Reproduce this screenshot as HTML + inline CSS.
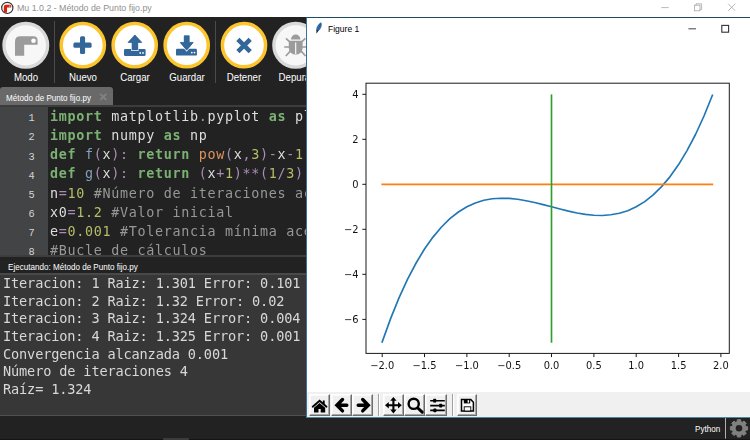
<!DOCTYPE html>
<html lang="es">
<head>
<meta charset="utf-8">
<title>Mu 1.0.2 - Método de Punto fijo.py</title>
<style>
html,body{margin:0;padding:0;}
body{width:750px;height:440px;overflow:hidden;background:#222;position:relative;font-family:"Liberation Sans",sans-serif;}
.abs{position:absolute;}
#titlebar{left:0;top:0;width:750px;height:16.7px;background:#fff;}
#title{left:17px;top:2.4px;font-size:9.4px;transform:scaleX(0.94);transform-origin:0 0;line-height:12px;color:#8f8f8f;white-space:nowrap;}
#toolbar{left:0;top:16.7px;width:750px;height:71.3px;background:#222;}
.btn{position:absolute;top:22px;width:47px;height:47px;}
.lbl{position:absolute;top:71.3px;width:60px;text-align:center;font-size:11.2px;transform:scaleX(0.865);line-height:12px;color:#fff;white-space:nowrap;}
.sep{position:absolute;top:21px;width:1px;height:62px;background:#4a4a4a;}
#tabbar{left:0;top:88px;width:750px;height:18px;background:#222;}
#tab{left:0;top:87px;width:113px;height:18px;background:#696969;border-radius:3px 3px 0 0;}
#tabline{left:0;top:105px;width:750px;height:2px;background:#3c3c3c;}
#tabtxt{left:5.5px;top:91.5px;font-size:9.35px;transform:scaleX(0.865);transform-origin:0 0;line-height:12px;color:#fff;white-space:nowrap;}
#margin{left:0;top:107px;width:48.4px;height:148.4px;background:#424446;}
#editor{left:48.4px;top:107px;width:702px;height:148.4px;background:#222;}
.ln{position:absolute;left:0;width:34.7px;text-align:right;font-family:"Liberation Mono",monospace;font-size:10.3px;line-height:19px;color:#d4d4d4;}
.cl{position:absolute;left:50.2px;font-family:"DejaVu Sans Mono","Liberation Mono",monospace;font-size:13.4px;letter-spacing:0.684px;line-height:19px;will-change:transform;color:#ddd;white-space:pre;}
.k{color:#7bb172;font-weight:bold;}
.o{color:#aa8db4;}
.n{color:#b5bd68;}
.f{color:#81a2be;}
.h{color:#de935f;}
.c{color:#969896;}
#split{left:0;top:255.4px;width:750px;height:1.6px;background:#3d3d3d;}
#runhdr{left:0;top:257px;width:750px;height:16.4px;background:#222;}
#runtxt{left:8.3px;top:261px;font-size:9.35px;transform:scaleX(0.865);transform-origin:0 0;line-height:12px;color:#fff;white-space:nowrap;}
#out{left:0;top:273.4px;width:750px;height:139.2px;background:#373737;border-top:2px solid #494949;border-bottom:1px solid #505050;}
.ol{position:absolute;left:2.8px;font-family:"DejaVu Sans Mono","Liberation Mono",monospace;font-size:13.6px;letter-spacing:-0.15px;line-height:17.65px;color:#d8d8d8;will-change:transform;white-space:pre;}
#status{left:0;top:415.6px;width:750px;height:25px;background:#222;}
#py{left:695px;top:422.9px;font-size:9.35px;transform:scaleX(0.865);transform-origin:0 0;line-height:12px;color:#fff;}
#fig{left:306px;top:17px;width:460px;height:401px;background:#fff;box-sizing:border-box;border:1px solid #357697;border-top-color:#1f4b5e;border-bottom-color:#4a88a6;}
#figtitle{left:328.3px;top:22.9px;font-size:9px;transform:scaleX(0.945);transform-origin:0 0;line-height:12px;color:#000;white-space:nowrap;}
#figbar{left:307px;top:391.6px;width:443px;height:25.4px;background:#f0f0f0;}

.tkb{position:absolute;top:394px;height:21.6px;box-sizing:border-box;background:#f0f0f0;border-left:1px solid #fff;border-top:1px solid #fff;border-right:1px solid #6d6d6d;border-bottom:1px solid #6d6d6d;box-shadow:inset -1px -1px 0 #a8a8a8, inset 1px 1px 0 #fafafa;}
.tks{position:absolute;top:394px;height:21.6px;width:1px;background:#a0a0a0;border-right:1px solid #fff;}
svg{position:absolute;left:0;top:0;}
text{font-family:"DejaVu Sans",sans-serif;}
</style>
</head>
<body>
<div class="abs" id="titlebar"></div>
<div class="abs" id="title">Mu 1.0.2 - Método de Punto fijo.py</div>
<div class="abs" id="toolbar"></div>


<!-- toolbar buttons -->
<svg id="tb" width="750" height="440" viewBox="0 0 750 440">
<g>
<circle cx="25.8" cy="45.3" r="21.8" fill="#f7f7f7" stroke="#d9d9d9" stroke-width="3.4"/>
<path d="M15 55.8 L15 41.6 Q15 36.3 20.4 36.3 L33.4 36.3 Q37.6 36.3 37.6 40.4 L37.6 44.8 L24.2 44.8 L24.2 55.8 Z" fill="#9b9b9b"/>
<circle cx="33.5" cy="40.7" r="2.3" fill="#fff"/>
</g>
<g fill="#fff" stroke="#fcc52e" stroke-width="3.5">
<circle cx="82.8" cy="45.2" r="21.6"/>
<circle cx="134.7" cy="45.2" r="21.6"/>
<circle cx="186.7" cy="45.2" r="21.6"/>
<circle cx="244" cy="45.2" r="21.6"/>
</g>
<!-- nuevo -->
<g fill="#336699"><rect x="73.4" y="42.6" width="18.2" height="5.1" rx="1.5"/><rect x="80" y="36.3" width="5.1" height="17.8" rx="1.5"/></g>
<!-- cargar -->
<g fill="#336699">
<rect x="124" y="49.1" width="21.6" height="6.8" rx="1.2"/>
<path d="M134.9 34.9 L141.8 42.4 L137.8 42.4 L137.8 50.3 L132 50.3 L132 42.4 L128 42.4 Z" stroke="#fff" stroke-width="1.5" paint-order="stroke"/>
<path d="M134.9 34.9 L141.8 42.4 L137.8 42.4 L137.8 49.3 L132 49.3 L132 42.4 L128 42.4 Z" stroke="#336699" stroke-width="0.6" stroke-linejoin="round"/>
<circle cx="140.2" cy="52.9" r="0.9" fill="#fff"/><circle cx="143" cy="52.9" r="0.9" fill="#fff"/>
</g>
<!-- guardar -->
<g fill="#336699">
<rect x="176" y="48.8" width="20.9" height="6.8" rx="1.2"/>
<path d="M184.2 35.8 L189.2 35.8 L189.2 42.4 L193.3 42.4 L186.7 50.2 L180.1 42.4 L184.2 42.4 Z" stroke="#fff" stroke-width="2" paint-order="stroke"/>
<path d="M184.2 35.8 L189.2 35.8 L189.2 42.4 L193.3 42.4 L186.7 50.2 L180.1 42.4 L184.2 42.4 Z" stroke="#336699" stroke-width="0.6" stroke-linejoin="round"/>
<circle cx="191.8" cy="52.6" r="0.9" fill="#fff"/><circle cx="194.5" cy="52.6" r="0.9" fill="#fff"/>
</g>
<!-- detener -->
<path d="M237.9 39.3 L250.2 51.6 M250.2 39.3 L237.9 51.6" stroke="#336699" stroke-width="4.5" stroke-linecap="butt" fill="none"/>
<!-- depurar -->
<g>
<circle cx="295.7" cy="45.3" r="21.8" fill="#f7f7f7" stroke="#d9d9d9" stroke-width="3.4"/>
<g stroke="#9b9b9b" stroke-width="1.6" fill="none">
<path d="M284.2 47 H307.2 M285.8 56 L291 50.4 M305.6 56 L300.4 50.4 M286 38.4 L290.5 42.6 M305.4 38.4 L300.9 42.6"/>
</g>
<path d="M291 39.4 A4.7 4.9 0 0 1 300.4 39.4 Z" fill="#9b9b9b"/>
<path d="M288.8 40.8 H302.6 V48 A6.9 6.6 0 0 1 288.8 48 Z" fill="#9b9b9b"/>
<path d="M295.7 42.5 V54" stroke="#fff" stroke-width="1.1"/>
</g>
</svg>
<div class="lbl" style="left:-4.5px">Modo</div>
<div class="sep" style="left:54px"></div>
<div class="lbl" style="left:52.5px">Nuevo</div>
<div class="lbl" style="left:104.5px">Cargar</div>
<div class="lbl" style="left:157px">Guardar</div>
<div class="sep" style="left:215.4px"></div>
<div class="lbl" style="left:214px">Detener</div>
<div class="lbl" style="left:266px">Depurar</div>

<div class="abs" id="tabbar"></div>
<div class="abs" id="tab"></div>
<div class="abs" id="tabline"></div>
<div class="abs" id="tabtxt">Método de Punto fijo.py</div>

<div class="abs" id="margin"></div>
<div class="abs" id="editor"></div>
<div class="ln" style="top:109.30px">1</div>
<div class="ln" style="top:128.45px">2</div>
<div class="ln" style="top:147.60px">3</div>
<div class="ln" style="top:166.75px">4</div>
<div class="ln" style="top:185.90px">5</div>
<div class="ln" style="top:205.05px">6</div>
<div class="ln" style="top:224.20px">7</div>
<div class="ln" style="top:243.35px">8</div>
<div class="cl" style="top:107.00px"><span class="k">import</span> matplotlib<span class="o">.</span>pyplot <span class="k">as</span> plt</div>
<div class="cl" style="top:126.15px"><span class="k">import</span> numpy <span class="k">as</span> np</div>
<div class="cl" style="top:145.30px"><span class="k">def</span> <span class="f">f</span><span class="o">(</span>x<span class="o">):</span> <span class="k">return</span> <span class="h">pow</span><span class="o">(</span>x<span class="o">,</span><span class="n">3</span><span class="o">)-</span>x<span class="o">-</span><span class="n">1</span></div>
<div class="cl" style="top:164.45px"><span class="k">def</span> <span class="f">g</span><span class="o">(</span>x<span class="o">):</span> <span class="k">return</span> <span class="o">(</span>x<span class="o">+</span><span class="n">1</span><span class="o">)**(</span><span class="n">1</span><span class="o">/</span><span class="n">3</span><span class="o">)</span></div>
<div class="cl" style="top:183.60px">n<span class="o">=</span><span class="n">10</span> <span class="c">#Número de iteraciones aceptadas</span></div>
<div class="cl" style="top:202.75px">x0<span class="o">=</span><span class="n">1.2</span> <span class="c">#Valor inicial</span></div>
<div class="cl" style="top:221.90px">e<span class="o">=</span><span class="n">0.001</span> <span class="c">#Tolerancia mínima aceptada</span></div>
<div class="cl" style="top:241.05px"><span class="c">#Bucle de cálculos</span></div>

<div class="abs" id="split"></div>
<div class="abs" id="runhdr"></div>
<div class="abs" id="runtxt">Ejecutando: Método de Punto fijo.py</div>
<div class="abs" id="out"></div>
<div class="ol" style="top:275px">Iteracion: 1 Raiz: 1.301 Error: 0.101</div>
<div class="ol" style="top:292.65px">Iteracion: 2 Raiz: 1.32 Error: 0.02</div>
<div class="ol" style="top:310.3px">Iteracion: 3 Raiz: 1.324 Error: 0.004</div>
<div class="ol" style="top:327.95px">Iteracion: 4 Raiz: 1.325 Error: 0.001</div>
<div class="ol" style="top:345.6px">Convergencia alcanzada 0.001</div>
<div class="ol" style="top:363.25px">Número de iteraciones 4</div>
<div class="ol" style="top:380.9px">Raíz= 1.324</div>

<div class="abs" id="status"></div>
<div class="abs" id="py">Python</div>
<div class="abs" style="left:0;top:438.6px;width:750px;height:1.4px;background:#151515"></div>
<div class="abs" style="left:163px;top:437.8px;width:25.5px;height:2.2px;background:#3b3b3b"></div>

<div class="abs" id="fig"></div>
<div class="abs" id="figtitle">Figure 1</div>
<div class="abs" id="figbar"></div>

<div class="tkb" style="left:309.3px;width:21.2px"></div>
<div class="tkb" style="left:330.5px;width:21.2px"></div>
<div class="tkb" style="left:351.7px;width:21.8px"></div>
<div class="tkb" style="left:382.6px;width:21.2px"></div>
<div class="tkb" style="left:403.8px;width:21.6px"></div>
<div class="tkb" style="left:425.4px;width:22px"></div>
<div class="tkb" style="left:456.6px;width:20.9px"></div>
<div class="tks" style="left:377.9px"></div>
<div class="tks" style="left:451.9px"></div>
<svg id="figicons" width="750" height="440" viewBox="0 0 750 440">
<!-- home -->
<g fill="#000">
<path d="M312.7 406.7 L319.6 400.8 L326.5 406.7" fill="none" stroke="#000" stroke-width="1.9" stroke-linecap="round"/>
<rect x="322.8" y="400.5" width="1.9" height="3.6"/>
<path d="M319.6 402.9 L325.2 407.7 V412.5 H320.7 V409 H318.5 V412.5 H314 V407.7 Z"/>
</g>
<!-- back -->
<path d="M346.8 405.2 H338 M342.5 399.5 L336.9 405.2 L342.5 410.9" stroke="#000" stroke-width="3.4" fill="none" stroke-linecap="round" stroke-linejoin="miter"/>
<!-- forward -->
<path d="M358.2 405.2 H367 M362.7 399.5 L368.3 405.2 L362.7 410.9" stroke="#000" stroke-width="3.4" fill="none" stroke-linecap="round" stroke-linejoin="miter"/>
<!-- pan -->
<g stroke="#000" stroke-width="2.1" fill="none"><path d="M393.4 399.6 V410.8 M387.6 405.2 H399.2"/></g>
<path d="M393.4 397 L396.6 400.8 H390.2 Z M393.4 413.4 L396.6 409.6 H390.2 Z M385 405.2 L388.8 402 V408.4 Z M401.8 405.2 L398 402 V408.4 Z" fill="#000"/>
<!-- zoom -->
<circle cx="413.7" cy="403.8" r="5.1" stroke="#000" stroke-width="2.4" fill="none"/>
<path d="M417.8 408 L422.2 412.2" stroke="#000" stroke-width="3" stroke-linecap="round"/>
<!-- config -->
<g stroke="#000" stroke-width="1.6"><path d="M430.2 400.7 H444.8 M430.2 405.6 H444.8 M430.2 410.4 H444.8"/></g>
<g fill="#000"><rect x="433.2" y="398.8" width="3" height="3.8" rx="0.7"/><rect x="439.2" y="403.7" width="3" height="3.8" rx="0.7"/><rect x="433.4" y="408.5" width="3" height="3.8" rx="0.7"/></g>
<!-- save -->
<path d="M461.5 399.6 H470.8 L473.4 402.2 V411 H461.5 Z" fill="#fff" stroke="#000" stroke-width="1.5" stroke-linejoin="miter"/>
<rect x="463.8" y="399.6" width="6.4" height="3.8" fill="#000"/>
<rect x="467.6" y="400.2" width="1.5" height="2.4" fill="#fff"/>
<rect x="464.2" y="406.8" width="6.6" height="4.2" fill="#fff" stroke="#000" stroke-width="0.9"/>
</svg>
<svg id="misc" width="750" height="440" viewBox="0 0 750 440">
<!-- mu app icon -->
<circle cx="7.3" cy="7.9" r="5.6" fill="#fff" stroke="#333" stroke-width="1.2"/>
<path d="M3.8 12.4 L3.8 7 Q3.8 4.8 6 4.8 L10 4.8 Q11.2 4.8 11.2 6 L11.2 7.6 L7 7.6 L7 12.8 Z" fill="#d9230f"/>
<circle cx="9.8" cy="6.1" r="0.6" fill="#fff"/>
<!-- mu window controls -->
<g stroke="#a6a6a6" stroke-width="0.8" fill="none">
<path d="M661.3 7.6 H668.7"/>
<rect x="694.4" y="5.2" width="5.6" height="5.6"/>
<path d="M696 5.2 V3.8 H701.6 V9.4 H700"/>
<path d="M728.2 3.8 L735.2 10.8 M735.2 3.8 L728.2 10.8"/>
</g>
<!-- figure window controls -->
<path d="M688.4 28.8 H696" stroke="#555" stroke-width="1.1"/>
<rect x="721.8" y="25.4" width="6.8" height="6.8" fill="none" stroke="#333" stroke-width="1.1"/>
<!-- tk feather -->
<g transform="translate(318.6 28) rotate(22)">
<path d="M0.3 -5.8 C2.4 -3.5 2.2 1.2 0.2 3.6 L-0.6 3.6 C-2.2 1.2 -2 -3.4 0.3 -5.8 Z" fill="#2b78cc" stroke="#1d3f66" stroke-width="0.5"/>
<path d="M-0.9 2.6 L0.7 2.6 L0 6.2 Z" fill="#111"/>
<path d="M0.1 -4.5 V5" stroke="#14407a" stroke-width="0.5"/>
</g>
<!-- tab close -->
<path d="M100.3 93.9 L106.3 99.9 M106.3 93.9 L100.3 99.9" stroke="#828282" stroke-width="1.9" fill="none"/>
<!-- status -->
<rect x="725" y="418" width="1" height="20.6" fill="#b0b0b0"/>
<path d="M745.65 426.46 L747.64 426.64 L747.64 429.96 L745.65 430.14 L745.00 431.70 L746.29 433.24 L743.94 435.59 L742.40 434.30 L740.84 434.95 L740.66 436.94 L737.34 436.94 L737.16 434.95 L735.60 434.30 L734.06 435.59 L731.71 433.24 L733.00 431.70 L732.35 430.14 L730.36 429.96 L730.36 426.64 L732.35 426.46 L733.00 424.90 L731.71 423.36 L734.06 421.01 L735.60 422.30 L737.16 421.65 L737.34 419.66 L740.66 419.66 L740.84 421.65 L742.40 422.30 L743.94 421.01 L746.29 423.36 L745.00 424.90 Z" fill="#808080" stroke="#808080" stroke-width="1" stroke-linejoin="round"/>
<circle cx="739" cy="428.3" r="3.3" fill="#222"/>
</svg>
<svg id="plot" width="750" height="440" viewBox="0 0 750 440">
<defs><filter id="gs" x="-5%" y="-5%" width="110%" height="110%" color-interpolation-filters="sRGB"><feColorMatrix type="saturate" values="0"/></filter></defs>
<!-- plot -->
<g fill="none" stroke-linecap="square">
<path d="M382.2 341.9 L390.7 318.4 L399.1 297.6 L407.6 279.1 L416.1 263.0 L424.5 249.0 L433.0 237.1 L441.5 227.0 L449.9 218.7 L458.4 212.0 L466.9 206.8 L475.3 203.0 L483.8 200.3 L492.3 198.8 L500.7 198.2 L509.2 198.4 L517.7 199.2 L526.1 200.7 L534.6 202.5 L543.1 204.6 L551.6 206.8 L560.0 209.0 L568.5 211.1 L577.0 213.0 L585.4 214.4 L593.9 215.3 L602.4 215.5 L610.8 214.8 L619.3 213.3 L627.8 210.7 L636.2 206.8 L644.7 201.6 L653.2 194.9 L661.6 186.6 L670.1 176.6 L678.6 164.6 L687.0 150.6 L695.5 134.5 L704.0 116.0 L712.4 95.2" stroke="#1f77b4" stroke-width="1.65" stroke-linejoin="round"/>
<path d="M382.2 184.3 L712.4 184.3" stroke="#ff7f0e" stroke-width="1.65"/>
<path d="M551.5 341.9 L551.5 95.2" stroke="#2ca02c" stroke-width="1.65"/>
<rect x="366.0" y="83.2" width="363.3" height="270.2" stroke="#1a1a1a" stroke-width="1"/>
</g>
<path d="M382.2 353.4 v3.7 M424.5 353.4 v3.7 M466.9 353.4 v3.7 M509.2 353.4 v3.7 M551.5 353.4 v3.7 M593.9 353.4 v3.7 M636.2 353.4 v3.7 M678.6 353.4 v3.7 M720.9 353.4 v3.7 M366.0 94.3 h-3.7 M366.0 139.3 h-3.7 M366.0 184.3 h-3.7 M366.0 229.3 h-3.7 M366.0 274.3 h-3.7 M366.0 319.4 h-3.7" stroke="#1a1a1a" stroke-width="1" fill="none"/>
<g filter="url(#gs)" font-size="9.9" fill="#111">
<g text-anchor="middle">
<text x="382.2" y="368.8">−2.0</text>
<text x="424.5" y="368.8">−1.5</text>
<text x="466.9" y="368.8">−1.0</text>
<text x="509.2" y="368.8">−0.5</text>
<text x="551.5" y="368.8">0.0</text>
<text x="593.9" y="368.8">0.5</text>
<text x="636.2" y="368.8">1.0</text>
<text x="678.6" y="368.8">1.5</text>
<text x="720.9" y="368.8">2.0</text>
</g>
<g text-anchor="end">
<text x="358.5" y="98.0">4</text>
<text x="358.5" y="143.0">2</text>
<text x="358.5" y="188.0">0</text>
<text x="358.5" y="233.0">−2</text>
<text x="358.5" y="278.0">−4</text>
<text x="358.5" y="323.1">−6</text>
</g>
</g>
</svg>
</body>
</html>
